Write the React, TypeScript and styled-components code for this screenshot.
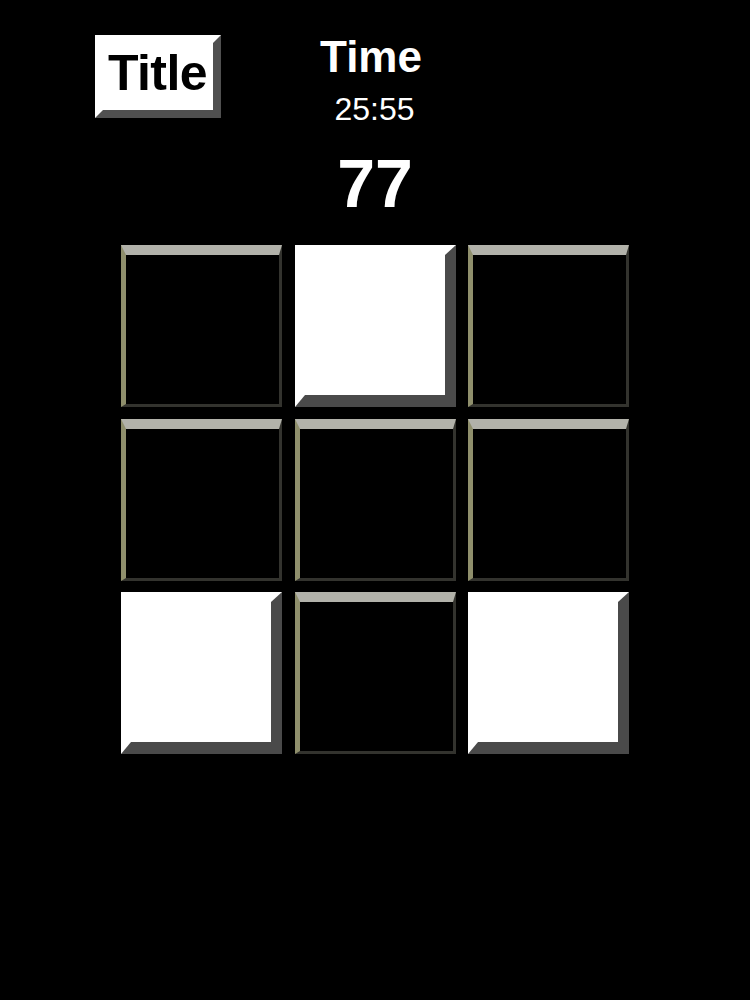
import React from "react";
import styled, { createGlobalStyle } from "styled-components";

const Global = createGlobalStyle`
  html, body { margin: 0; padding: 0; background: #000; }
  body { font-family: "Liberation Sans", Arial, Helvetica, sans-serif; color: #fff; }
  #root { min-height: 1000px; background: #000; }
`;

const Page = styled.div`
  width: 750px;
  height: 1000px;
  background: #000;
  display: flex;
  flex-direction: column;
  align-items: center;
  overflow: hidden;
`;

const Header = styled.div`
  width: 100%;
  display: grid;
  grid-template-columns: 1fr auto 1fr;
  align-items: start;
  margin-top: 35px;
`;

const TitleButton = styled.button`
  justify-self: start;
  margin-left: 95px;
  box-sizing: border-box;
  width: 126px;
  padding: 5px 0 12px 5px;
  text-align: left;
  background: #fff;
  border-style: solid;
  border-width: 8px;
  border-color: #fff #505050 #505050 #fff;
  font-family: "Liberation Sans", Arial, sans-serif;
  font-weight: 700;
  font-size: 50px;
  line-height: 50px;
  letter-spacing: -0.6px;
  color: #000;
  cursor: pointer;
`;

const Center = styled.div`
  display: flex;
  flex-direction: column;
  align-items: center;
`;

const TimeLabel = styled.div`
  font-weight: 700;
  font-size: 44px;
  line-height: 44px;
  margin-left: -8px;
`;

const TimeValue = styled.div`
  font-size: 32px;
  line-height: 32px;
  margin-top: 14px;
  margin-left: -1px;
`;

const Score = styled.div`
  font-weight: 700;
  font-size: 68px;
  line-height: 68px;
  margin-top: 24px;
`;

const Board = styled.div`
  display: grid;
  grid-template-columns: repeat(3, 161px);
  grid-auto-rows: 162px;
  gap: 11.5px 12.5px;
  margin-top: 28px;
`;

const Tile = styled.div<{ $lit: boolean }>`
  box-sizing: border-box;
  border-style: solid;
  ${(p) =>
    p.$lit
      ? `
    background: #fff;
    border-width: 10px 11px 12px 10px;
    border-color: #fff #4a4a4a #4a4a4a #fff;
  `
      : `
    background: #000;
    border-width: 10px 3px 3px 5px;
    border-color: #b2b2aa #33332e #33332e #8f8f6c;
  `}
`;

const pattern = [false, true, false, false, false, false, true, false, true];

export default function App() {
  return (
    <Page>
      <Global />
      <Header>
        <TitleButton>Title</TitleButton>
        <Center>
          <TimeLabel>Time</TimeLabel>
          <TimeValue>25:55</TimeValue>
          <Score>77</Score>
        </Center>
        <div />
      </Header>
      <Board>
        {pattern.map((lit, i) => (
          <Tile key={i} $lit={lit} />
        ))}
      </Board>
    </Page>
  );
}
